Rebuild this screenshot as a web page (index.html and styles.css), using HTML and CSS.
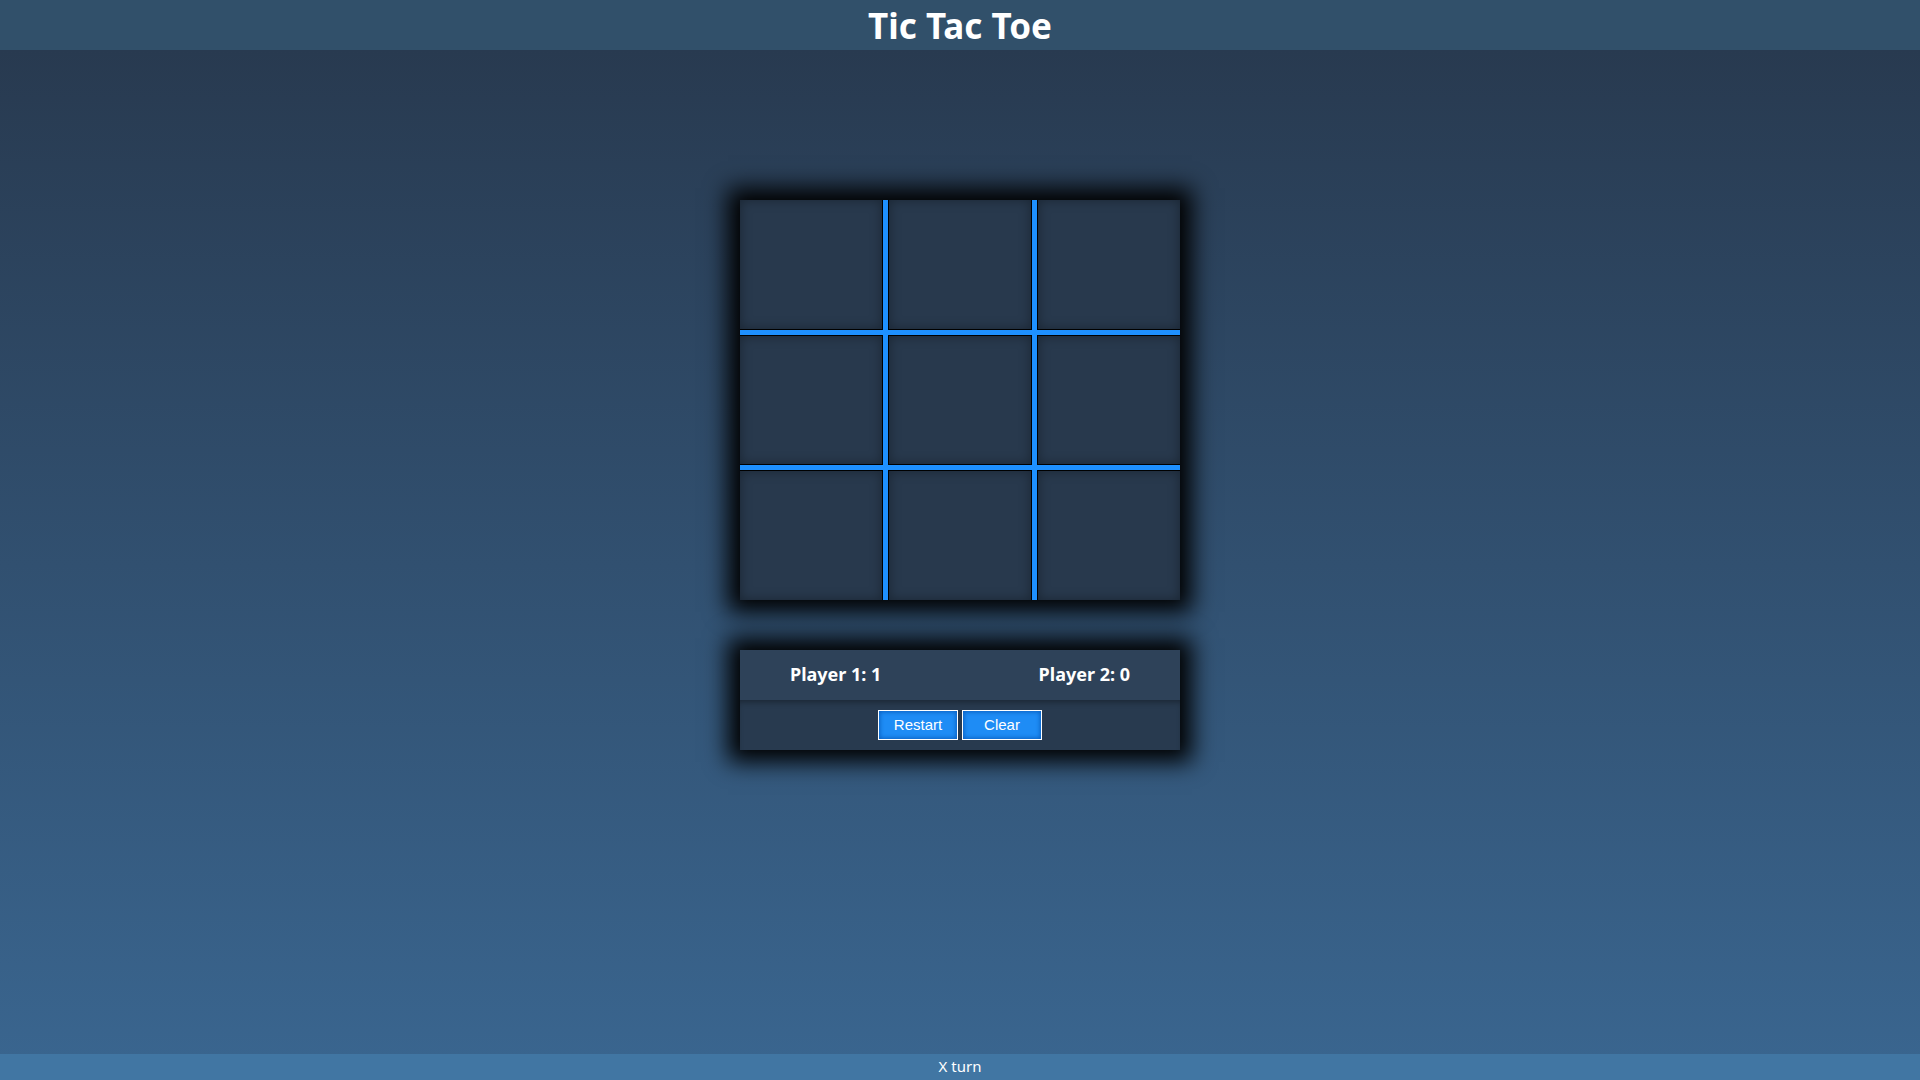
FILE: index.html
```html
<!DOCTYPE html>
<html>
<head>
<meta charset="utf-8">
<title>Tic Tac Toe</title>
<link rel="stylesheet" href="styles.css">
</head>
<body>
<header class="top-bar"><h1 class="title">Tic Tac Toe</h1></header>
<main class="main">
  <div class="board">
    <div class="cell"></div><div class="cell"></div><div class="cell"></div>
    <div class="cell"></div><div class="cell"></div><div class="cell"></div>
    <div class="cell"></div><div class="cell"></div><div class="cell"></div>
  </div>
  <div class="panel">
    <div class="scores"><span class="score">Player 1: 1</span><span class="score">Player 2: 0</span></div>
    <div class="controls"><button class="btn">Restart</button><button class="btn">Clear</button></div>
  </div>
</main>
<footer class="status">X turn</footer>
</body>
</html>
```
FILE: styles.css
```css
html, body { margin: 0; padding: 0; height: 100%; }
body {
  font-family: "Noto Sans", "Open Sans", sans-serif;
  background: linear-gradient(to bottom, #283a50 0px, #283a50 50px, #3a6690 100%);
  color: #fff;
  display: flex;
  flex-direction: column;
  overflow: hidden;
}
.top-bar {
  height: 50px;
  background: #31506a;
  flex: none;
}
.title {
  margin: 0;
  padding-top: 2px;
  text-align: center;
  font-size: 35px;
  line-height: 48px;
  font-weight: 700;
}
.main {
  flex: 1;
  display: flex;
  flex-direction: column;
  align-items: center;
  padding-top: 150px;
}
.board {
  width: 440px;
  height: 400px;
  display: grid;
  grid-template-columns: repeat(3, 1fr);
  grid-template-rows: repeat(3, 1fr);
  gap: 7px;
  background: #1e90ff;
  overflow: hidden;
  box-shadow: 0 0 22px 12px #000;
}
.cell {
  background: #28394d;
  box-shadow: 0 0 0 1px #000, inset 0 0 12px rgba(0,0,0,0.35);
}
.panel {
  margin-top: 50px;
  width: 440px;
  box-shadow: 0 0 22px 12px #000;
}
.scores {
  height: 50px;
  box-sizing: border-box;
  padding: 0 50px 3px;
  display: flex;
  justify-content: space-between;
  align-items: center;
  background: #2e4259;
  font-weight: 700;
  font-size: 18px;
}
.controls {
  height: 50px;
  display: flex;
  justify-content: center;
  align-items: center;
  gap: 4px;
  background: #283a4f;
  box-shadow: inset 0 5px 6px -3px rgba(0,0,0,0.35);
}
.btn {
  width: 80px;
  height: 30px;
  padding: 0 0 1px;
  border: 1px solid #fff;
  background: #1e8cf5;
  box-shadow: inset 0 0 4px 1px #0a5fc0;
  color: #fff;
  font-family: "Liberation Sans", Arial, sans-serif;
  font-size: 15px;
}
.status {
  flex: none;
  height: 26px;
  line-height: 25px;
  text-align: center;
  background: #4176a3;
  font-size: 15px;
}
```
